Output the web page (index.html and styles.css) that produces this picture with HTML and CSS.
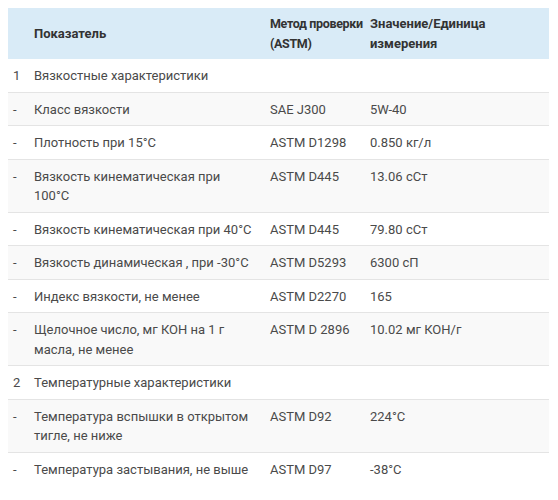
FILE: index.html
```html
<!DOCTYPE html>
<html lang="ru">
<head>
<meta charset="utf-8">
<link rel="stylesheet" href="styles.css">
</head>
<body>
<table class="spec">
  <colgroup>
    <col class="c-num"><col class="c-name"><col class="c-method"><col class="c-value">
  </colgroup>
  <thead>
    <tr><th></th><th>Показатель</th><th class="th-tight">Метод проверки<br>(ASTM)</th><th>Значение/Единица<br>измерения</th></tr>
  </thead>
  <tbody>
    <tr><td>1</td><td>Вязкостные характеристики</td><td></td><td></td></tr>
    <tr><td>-</td><td>Класс вязкости</td><td>SAE J300</td><td>5W-40</td></tr>
    <tr><td>-</td><td>Плотность при 15°C</td><td>ASTM D1298</td><td>0.850 кг/л</td></tr>
    <tr><td>-</td><td>Вязкость кинематическая при 100°C</td><td>ASTM D445</td><td>13.06 сСт</td></tr>
    <tr><td>-</td><td>Вязкость кинематическая при 40°C</td><td>ASTM D445</td><td>79.80 сСт</td></tr>
    <tr><td>-</td><td>Вязкость динамическая , при -30°C</td><td>ASTM D5293</td><td>6300 сП</td></tr>
    <tr><td>-</td><td>Индекс вязкости, не менее</td><td>ASTM D2270</td><td>165</td></tr>
    <tr><td>-</td><td>Щелочное число, мг КОН на 1 г масла, не менее</td><td>ASTM D 2896</td><td>10.02 мг КОН/г</td></tr>
    <tr><td>2</td><td>Температурные характеристики</td><td></td><td></td></tr>
    <tr><td>-</td><td>Температура вспышки в открытом тигле, не ниже</td><td>ASTM D92</td><td>224°C</td></tr>
    <tr><td>-</td><td>Температура застывания, не выше</td><td>ASTM D97</td><td>-38°C</td></tr>
  </tbody>
</table>
</body>
</html>
```
FILE: styles.css
```css
html, body {
  margin: 0;
  background: #fff;
}
body {
  padding: 8px;
  font-family: Roboto, "Liberation Sans", sans-serif;
  font-size: 13px;
  color: #4a4a4a;
}
.spec {
  width: 541px;
  border-collapse: collapse;
  table-layout: fixed;
}
.c-num { width: 21px; }
.c-name { width: 236px; }
.c-method { width: 100px; }
.c-value { width: auto; }
.spec th, .spec td {
  text-align: left;
  vertical-align: top;
  line-height: 19.5px;
  padding: 7px 10px 6px 5px;
}
.spec th {
  background: #d9ebf7;
  color: #333;
  font-weight: 700;
  white-space: nowrap;
  padding: 6px 4px 6px 5px;
  vertical-align: middle;
}
.spec th.th-tight {
  font-size: 12.5px;
  letter-spacing: -0.35px;
}
.spec td {
  border-top: 1px solid #e4e4e4;
}
.spec tbody tr:first-child td {
  border-top: none;
}
.spec tbody tr:nth-child(even) td {
  background: #f9f9f9;
}
```
